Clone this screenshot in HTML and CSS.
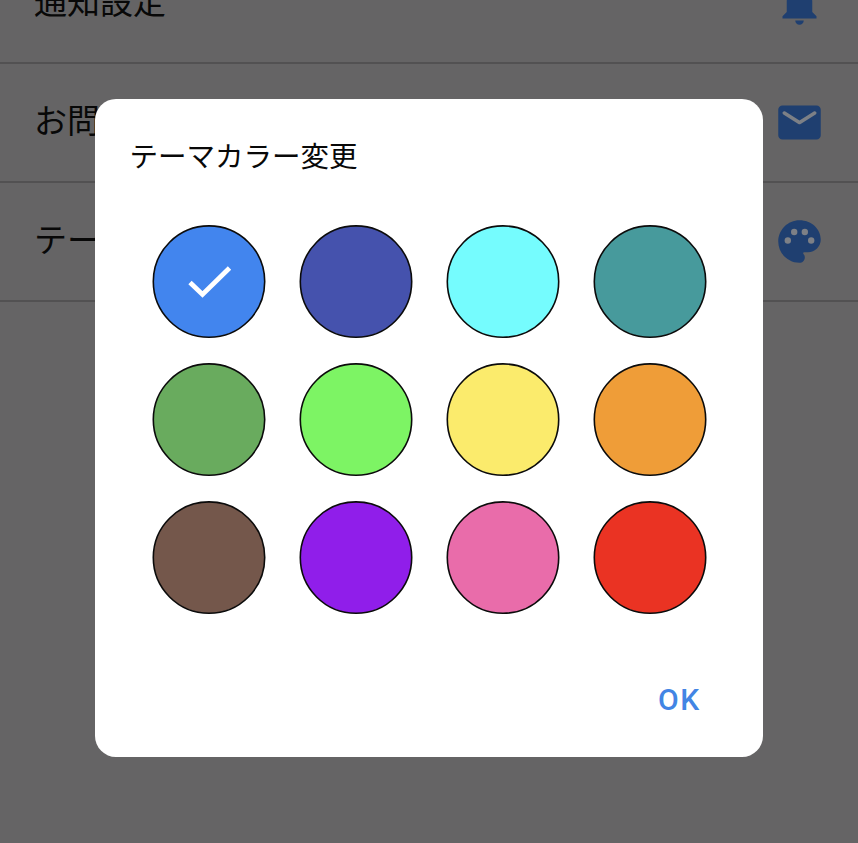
FILE: index.html
```html
<!DOCTYPE html>
<html lang="ja">
<head>
<meta charset="utf-8">
<title>テーマカラー変更</title>
<link rel="stylesheet" href="styles.css">
</head>
<body>
<main class="settings">
  <div class="row"><span class="label">通知設定</span><svg class="icon" viewBox="0 0 24 24"><path d="M12 22c1.100 0 2-.9 2-2h-4c0 1.100.89 2 2 2zm6-6v-5c0-3.070-1.640-5.640-4.500-6.320V4a1.500 1.500 0 0 0-3 0v.68C7.630 5.360 6 7.920 6 11v5l-2 2v1h16v-1l-2-2z"/></svg></div>
  <div class="row"><span class="label">お問い合わせ</span><svg class="icon" viewBox="0 0 24 24"><path class="cutout" d="M3.500 6h17v8h-17z"/><path d="M20 4H4c-1.100 0-2 .9-2 2v12c0 1.100.9 2 2 2h16c1.100 0 2-.9 2-2V6c0-1.100-.9-2-2-2zm-.4 4.250l-7.070 4.420c-.32.2-.74.2-1.060 0L4.400 8.250c-.25-.16-.4-.43-.4-.72 0-.67.73-1.070 1.300-.72L12 11l6.700-4.190c.57-.35 1.300.05 1.300.72 0 .29-.15.56-.4.72z"/></svg></div>
  <div class="row"><span class="label">テーマカラー変更</span><svg class="icon" viewBox="0 0 24 24"><path d="M12 2C6.490 2 2 6.490 2 12s4.490 10 10 10c1.380 0 2.500-1.120 2.500-2.500 0-.61-.23-1.200-.64-1.670-.08-.1-.13-.21-.13-.33 0-.28.22-.5.5-.5H16c3.310 0 6-2.690 6-6 0-4.960-4.490-9-10-9z"/><g class="cutout"><circle cx="6.500" cy="11.500" r="1.500"/><circle cx="9.500" cy="7.500" r="1.500"/><circle cx="14.500" cy="7.500" r="1.500"/><circle cx="17.500" cy="11.500" r="1.500"/></g></svg></div>
</main>
<div class="overlay">
  <section class="dialog" role="dialog">
    <h1 class="title">テーマカラー変更</h1>
    <div class="colors">
      <svg class="swatch blue" viewBox="0 0 114 114"><circle cx="57" cy="56.600" r="55.700"/><path class="check" d="M38 57.500l12.500 12L77.500 43"/></svg>
      <svg class="swatch indigo" viewBox="0 0 114 114"><circle cx="57" cy="56.600" r="55.700"/></svg>
      <svg class="swatch cyan" viewBox="0 0 114 114"><circle cx="57" cy="56.600" r="55.700"/></svg>
      <svg class="swatch teal" viewBox="0 0 114 114"><circle cx="57" cy="56.600" r="55.700"/></svg>
      <svg class="swatch green" viewBox="0 0 114 114"><circle cx="57" cy="56.600" r="55.700"/></svg>
      <svg class="swatch lime" viewBox="0 0 114 114"><circle cx="57" cy="56.600" r="55.700"/></svg>
      <svg class="swatch yellow" viewBox="0 0 114 114"><circle cx="57" cy="56.600" r="55.700"/></svg>
      <svg class="swatch orange" viewBox="0 0 114 114"><circle cx="57" cy="56.600" r="55.700"/></svg>
      <svg class="swatch brown" viewBox="0 0 114 114"><circle cx="57" cy="56.600" r="55.700"/></svg>
      <svg class="swatch purple" viewBox="0 0 114 114"><circle cx="57" cy="56.600" r="55.700"/></svg>
      <svg class="swatch pink" viewBox="0 0 114 114"><circle cx="57" cy="56.600" r="55.700"/></svg>
      <svg class="swatch red" viewBox="0 0 114 114"><circle cx="57" cy="56.600" r="55.700"/></svg>
    </div>
    <button class="ok">OK</button>
  </section>
</div>
</body>
</html>
```
FILE: styles.css
```css
* { box-sizing: border-box; }
body {
  margin: 0;
  height: 843px;
  overflow: hidden;
  background: #656465;
  color: #080808;
  font-family: "Noto Sans CJK JP", sans-serif;
}
.settings { margin-top: -55px; }
.row {
  height: 119px;
  padding: 0 33px 0 34px;
  display: flex;
  align-items: center;
  justify-content: space-between;
  border-bottom: 2px solid #525152;
}
.label {
  padding-bottom: 8px;
  font-size: 33px;
  line-height: 48px;
}
.icon { width: 51px; height: 51px; fill: #1f3f70; }
.cutout { fill: #7d8086; }
.overlay {
  position: absolute;
  inset: 0;
  padding: 99px 95px 86px;
}
.dialog {
  width: 668px;
  height: 658px;
  padding: 34px 57px 0;
  display: flex;
  flex-direction: column;
  background: #fff;
  border-radius: 21px;
}
.title {
  margin: 0 0 0 -22.500px;
  font-size: 28.500px;
  font-weight: 400;
  line-height: 44px;
}
.colors {
  margin-top: 48px;
  display: grid;
  grid-template-columns: repeat(4, 114px);
  gap: 24.200px 33px;
}
.swatch {
  width: 114px;
  height: 114px;
  stroke: #0b0b0b;
  stroke-width: 1.600;
}
.check { fill: none; stroke: #fff; stroke-width: 4.800; }
.blue { fill: #4285ee; }
.indigo { fill: #4552ad; }
.cyan { fill: #75fcfe; }
.teal { fill: #479a9c; }
.green { fill: #69ab5e; }
.lime { fill: #7df464; }
.yellow { fill: #fbeb6c; }
.orange { fill: #ef9d38; }
.brown { fill: #74574b; }
.purple { fill: #901eea; }
.pink { fill: #e96caa; }
.red { fill: #ea3323; }
.ok {
  align-self: flex-end;
  margin: 64.500px 5px 0 0;
  padding: 0;
  border: 0;
  background: none;
  color: #4285e4;
  font: 500 30px/40px Roboto, sans-serif;
  letter-spacing: 1.700px;
}
```
